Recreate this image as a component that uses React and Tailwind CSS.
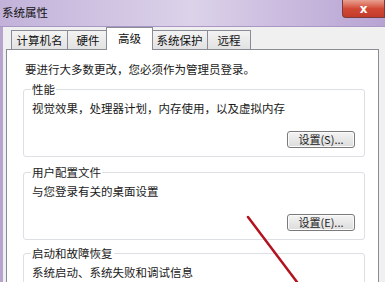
import React from 'react';

const tabs = [
  { label: '计算机名', w: 'w-[56px]' },
  { label: '硬件', w: 'w-[41px]' },
  { label: '高级', w: 'w-[47px]', active: true },
  { label: '系统保护', w: 'w-[56px]' },
  { label: '远程', w: 'w-[44px]' },
];

const Group = ({ title, desc, button, className = '' }) => (
  <fieldset className={`mx-[16px] mr-[13px] rounded-[3px] border border-[#dcdfe3] px-[8px] ${className}`}>
    <legend className="ml-[-1px] px-[1px] leading-[16px] text-[#1a1a1a]">{title}</legend>
    <p className="mt-[3px] leading-[16px] text-[#1a1a1a]">{desc}</p>
    {button && (
      <div className="mt-[15px] mb-[8px] flex justify-end">
        <button className="h-[17px] w-[68px] mr-[1px] rounded-[3px] border border-[#7a7a7a] bg-gradient-to-b from-[#f4f4f4] to-[#dcdcdc] text-[11px] leading-[15px] text-[#222] shadow-[inset_0_0_0_1px_#fbfbfb]">
          {button}
        </button>
      </div>
    )}
  </fieldset>
);

export default function App() {
  return (
    <div
      className="relative h-[282px] w-[385px] overflow-hidden bg-[#f0f0f0] text-[11.5px]"
      style={{ fontFamily: '"Noto Sans CJK SC", "Noto Sans", sans-serif' }}
    >
      {/* title bar */}
      <div className="relative flex h-[27px] items-center border-b border-[#a996c4] bg-gradient-to-r from-[#c2b2da] via-[#dcd2e9] to-[#b7a3d3] pl-[2px]">
        <span className="text-[11.5px] leading-none text-[#111]">系统属性</span>
        <div className="absolute right-0 top-0 flex h-[18px] w-[43px] items-center justify-center rounded-bl-[4px] border border-t-0 border-[#7d3a3a] bg-gradient-to-b from-[#e8a092] via-[#d24a36] to-[#c23a2a]">
          <span className="text-[12px] font-bold leading-none text-white" style={{ fontFamily: 'Verdana, "DejaVu Sans", sans-serif' }}>x</span>
        </div>
      </div>

      {/* body */}
      <div className="flex h-[255px] border-l-[3px] border-[#b6a4cf]">
        <div className="flex flex-1 flex-col pl-[3px] pr-[6px]">
          {/* tabs */}
          <div className="flex h-[26px] items-end pl-[5px]">
            {tabs.map((t) =>
              t.active ? (
                <div
                  key={t.label}
                  className={`${t.w} relative z-10 -mx-[2px] -mb-[1px] flex h-[23px] items-start justify-center border border-b-0 border-[#898c95] bg-white pt-[2px] leading-[16px] text-[#111]`}
                >
                  {t.label}
                </div>
              ) : (
                <div
                  key={t.label}
                  className={`${t.w} flex h-[19px] items-center justify-center border border-b-0 border-r-0 border-[#898c95] bg-gradient-to-b from-[#f3f3f3] to-[#e2e2e2] leading-[16px] text-[#111] last:border-r`}
                >
                  {t.label}
                </div>
              )
            )}
          </div>

          {/* panel */}
          <div className="flex-1 border border-[#898c95] bg-white pt-[11px]">
            <p className="pl-[18px] leading-[16px] text-[#1a1a1a]">要进行大多数更改，您必须作为管理员登录。</p>
            <Group className="mt-[4px]" title="性能" desc="视觉效果，处理器计划，内存使用，以及虚拟内存" button="设置(S)..." />
            <Group className="mt-[7px]" title="用户配置文件" desc="与您登录有关的桌面设置" button="设置(E)..." />
            <Group className="mt-[5px] h-[60px]" title="启动和故障恢复" desc="系统启动、系统失败和调试信息" />
          </div>
        </div>
      </div>

      {/* red annotation arrow */}
      <svg className="pointer-events-none absolute left-0 top-0" width="385" height="282">
        <line x1="248" y1="217" x2="303" y2="290" stroke="#b3121f" strokeWidth="2.5" strokeLinecap="round" />
      </svg>
    </div>
  );
}
